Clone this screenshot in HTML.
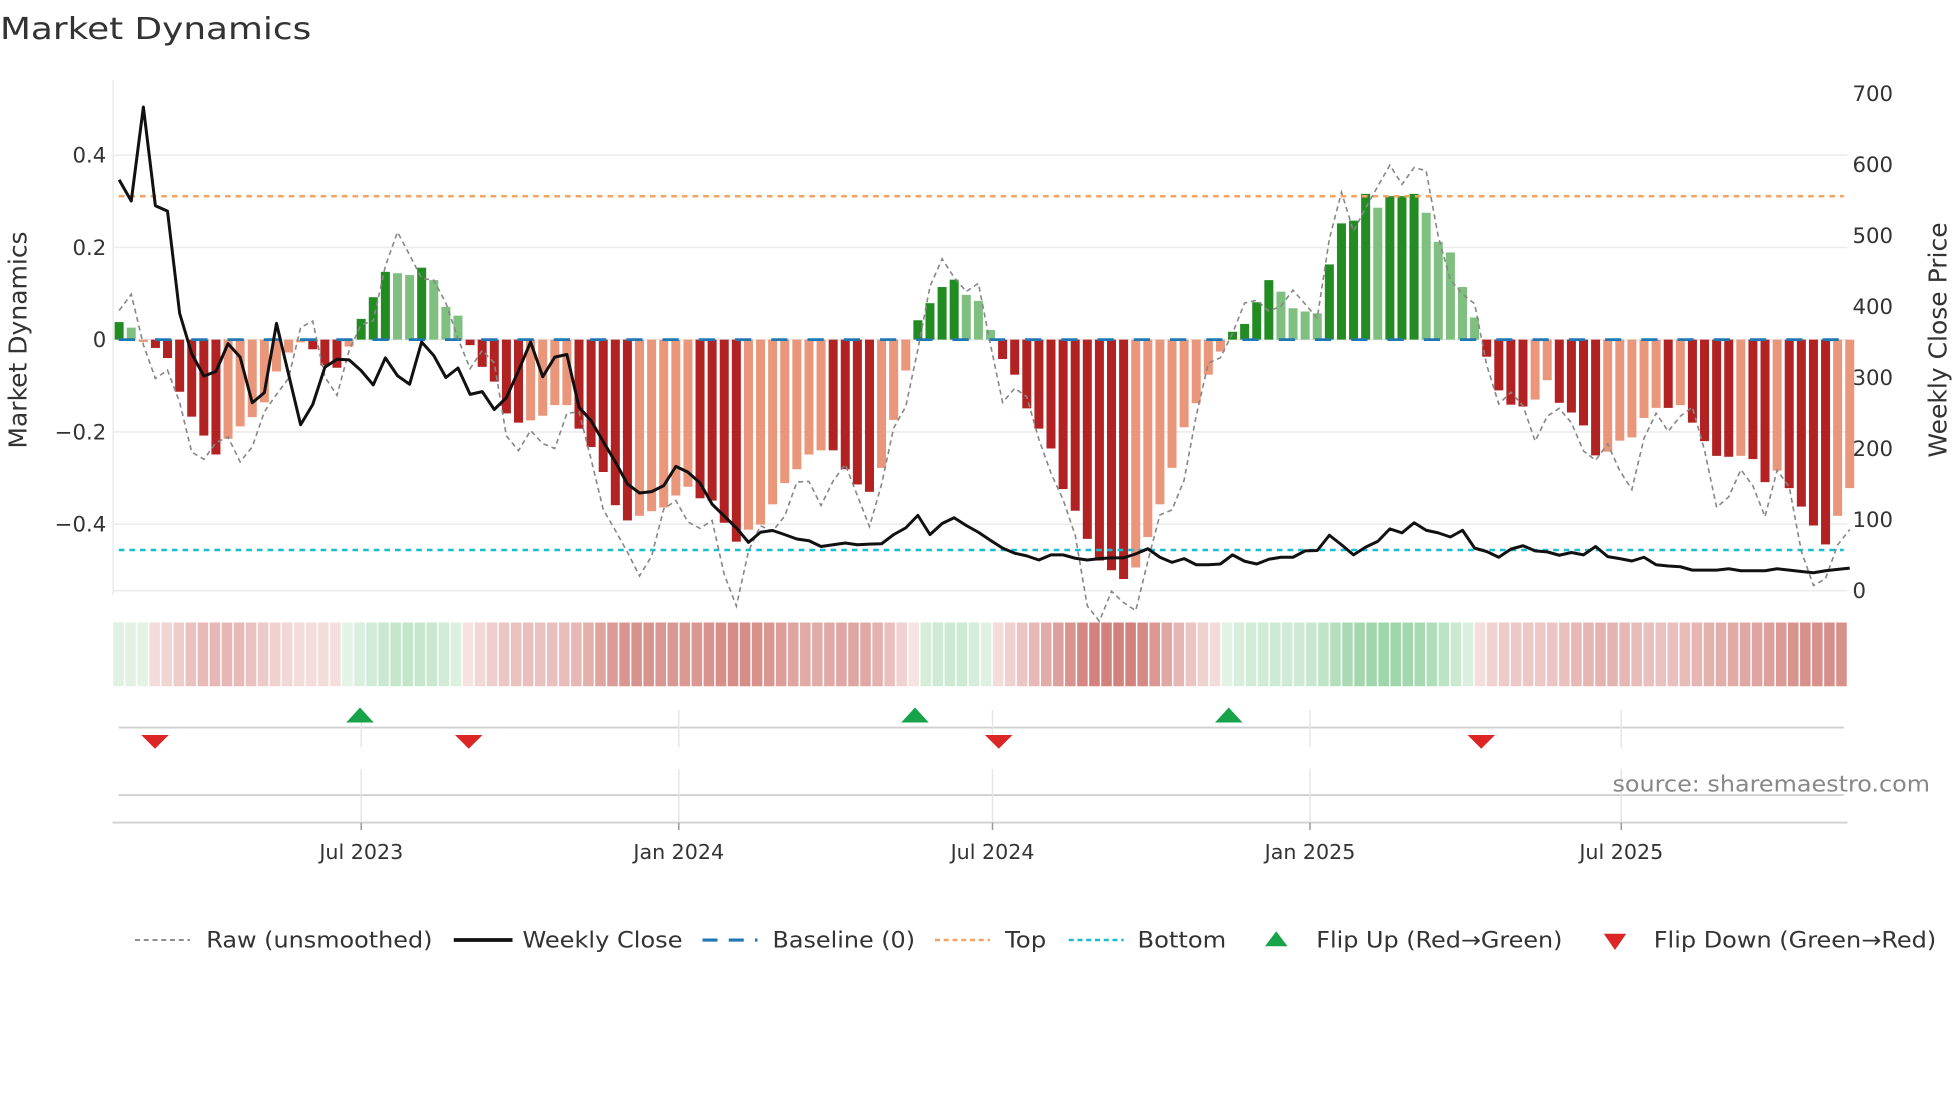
<!DOCTYPE html>
<html><head><meta charset="utf-8">
<style>
html,body{margin:0;padding:0;background:#fff;width:1960px;height:1102px;overflow:hidden}
svg{display:block}
text{font-family:"DejaVu Sans","Liberation Sans",sans-serif;fill:#333}
</style></head>
<body>
<svg id="c" width="1960" height="1102" viewBox="0 0 1568 881.6" xmlns="http://www.w3.org/2000/svg">
<rect width="1568" height="882" fill="#fff"/>
<text x="0" y="31" font-size="24" textLength="249" lengthAdjust="spacingAndGlyphs">Market Dynamics</text>
<g id="grid"></g>
<g id="bars"></g>
<g id="lines"></g>
<g id="heat"></g>
<g id="lower">
 <line x1="95" y1="582" x2="1475" y2="582" stroke="#d0d0d0" stroke-width="1.5"/>
 <line x1="95" y1="636" x2="1475" y2="636" stroke="#d0d0d0" stroke-width="1.5"/>
 <line x1="90" y1="658" x2="1478" y2="658" stroke="#d0d0d0" stroke-width="1.5"/>
</g>
<text x="1544" y="633" font-size="17.5" text-anchor="end" style="fill:#888" textLength="254" lengthAdjust="spacingAndGlyphs">source: sharemaestro.com</text>
<g id="legend" font-size="17.5">
 <line x1="108" y1="752" x2="152" y2="752" stroke="#888" stroke-width="1.5" stroke-dasharray="4,3"/>
 <text x="165" y="758" textLength="181" lengthAdjust="spacingAndGlyphs">Raw (unsmoothed)</text>
 <line x1="363" y1="752" x2="410" y2="752" stroke="#111" stroke-width="3"/>
 <text x="418" y="758" textLength="128" lengthAdjust="spacingAndGlyphs">Weekly Close</text>
 <line x1="562" y1="752" x2="606" y2="752" stroke="#1f77b4" stroke-width="2.5" stroke-dasharray="12,9"/>
 <text x="618" y="758" textLength="114" lengthAdjust="spacingAndGlyphs">Baseline (0)</text>
 <line x1="748" y1="752" x2="792" y2="752" stroke="#f4a460" stroke-width="2" stroke-dasharray="4,3"/>
 <text x="804" y="758" textLength="33" lengthAdjust="spacingAndGlyphs">Top</text>
 <line x1="855" y1="752" x2="899" y2="752" stroke="#17becf" stroke-width="2" stroke-dasharray="4,3"/>
 <text x="910" y="758" textLength="71" lengthAdjust="spacingAndGlyphs">Bottom</text>
 <polygon points="1012,757 1021,745 1030,757" fill="#16a34a"/>
 <text x="1053" y="758" textLength="197" lengthAdjust="spacingAndGlyphs">Flip Up (Red→Green)</text>
 <polygon points="1283,747 1301,747 1292,760" fill="#dc2626"/>
 <text x="1323" y="758" textLength="226" lengthAdjust="spacingAndGlyphs">Flip Down (Green→Red)</text>
</g>
</svg>
<script>
(function(){
var NS="http://www.w3.org/2000/svg";
function el(p,t,a){var e=document.createElementNS(NS,t);for(var k in a)e.setAttribute(k,a[k]);p.appendChild(e);return e;}
var V=[.038,.026,-.005,-.018,-.04,-.113,-.167,-.208,-.249,-.215,-.188,-.168,-.136,-.069,-.028,-.006,-.021,-.056,-.061,-.015,.045,.092,.147,.144,.14,.156,.129,.071,.052,-.012,-.059,-.091,-.16,-.18,-.175,-.165,-.142,-.142,
-.193,-.233,-.287,-.359,-.392,-.382,-.372,-.364,-.338,-.319,-.344,-.349,-.397,-.438,-.412,-.401,-.357,-.311,-.281,-.249,-.24,-.24,-.281,-.314,-.33,-.278,-.174,-.067,.042,.079,.114,.13,.097,.084,.021,
-.042,-.076,-.149,-.193,-.236,-.324,-.371,-.432,-.479,-.5,-.519,-.494,-.428,-.357,-.278,-.19,-.138,-.076,-.026,.017,.034,.081,.129,.104,.068,.061,.057,.163,.252,.258,.316,.286,.311,.311,.316,.275,.212,.189,.114,.048,
-.037,-.11,-.141,-.145,-.13,-.088,-.137,-.158,-.186,-.251,-.243,-.219,-.212,-.17,-.148,-.148,-.142,-.18,-.22,-.252,-.254,-.252,-.259,-.309,-.284,-.322,-.362,-.403,-.444,-.382,-.322];
var F=["100111111","0000000","111","0","111","00","1","000","11111","0000","11111","00000","1111","0000000","1111","000","1111","000","11111111111","00000000","1111","0000","1111","0","111","00000","1111","00","1111","00000","1","0","1111","0","11","0","1111","00"].join("");
var P=[295,358,80,372,388,690,810,876,862,780,820,955,925,720,870,1020,960,850,826,828,860,902,822,875,900,775,815,880,852,930,922,975,940,860,775,878,820,
812,968,1008,1070,1130,1195,1222,1218,1200,1143,1160,1192,1255,1290,1325,1368,1338,1333,1345,1358,1363,1380,1375,1370,1375,1373,1372,1345,1325,1288,1345,1312,1295,1318,1338,1362,1385,
1400,1408,1420,1405,1405,1415,1420,1416,1414,1414,1402,1387,1412,1427,1416,1434,1434,1432,1405,1424,1432,1418,1412,1412,1393,1392,1347,1375,1405,1382,1365,1328,1340,1310,1332,1340,
1352,1332,1385,1395,1412,1388,1378,1393,1396,1406,1398,1405,1380,1410,1416,1423,1412,1434,1438,1440,1450,1450,1450,1446,1452,1452,1452,1446,1450,1454,1458,1452,1448,1444];
var n=V.length, x0=95.3, dx=(1479.8-95.3)/(n-1);
var Y0=271.7, S=73.8/0.2;
function yv(v){return Y0-v*S;}
var g=document.getElementById("grid");
[0.4,0.2,0,-0.2,-0.4].forEach(function(v){el(g,"line",{x1:90,x2:1478,y1:yv(v),y2:yv(v),stroke:"#ececec","stroke-width":1.3});});
el(g,"line",{x1:90,x2:1478,y1:472.5,y2:472.5,stroke:"#ececec","stroke-width":1.3});
el(g,"line",{x1:90.5,x2:90.5,y1:64,y2:476,stroke:"#ececec","stroke-width":1.3});
var lab=[["0.4",0.4],["0.2",0.2],["0",0],["−0.2",-0.2],["−0.4",-0.4]];
lab.forEach(function(l){var t=el(g,"text",{x:85,y:yv(l[1])+6,"font-size":17,"text-anchor":"end"});t.textContent=l[0];});
for(var i=0;i<=7;i++){var y=472.3-i*56.78;var t=el(g,"text",{x:1482,y:y+6,"font-size":17});t.textContent=String(i*100);}
var t1=el(g,"text",{x:0,y:0,"font-size":20,"text-anchor":"middle",transform:"translate(21,272) rotate(-90)"});t1.textContent="Market Dynamics";
var t2=el(g,"text",{x:0,y:0,"font-size":20,"text-anchor":"middle",transform:"translate(1557,272) rotate(-90)"});t2.textContent="Weekly Close Price";
var b=document.getElementById("bars");
for(var k=0;k<n;k++){var v=V[k],d=F[k]=="1",c;
 if(v>=0)c=d?"#228b22":"#7fbf7f";else c=d?"#b22222":"#e9967a";
 var y1=yv(Math.max(v,0)),h=Math.abs(v)*S;
 el(b,"rect",{x:x0+k*dx-3.6,y:y1,width:7.2,height:Math.max(h,0.5),fill:c});}
var L=document.getElementById("lines");
el(L,"line",{x1:95,x2:1475,y1:Y0,y2:Y0,stroke:"#1f77b4","stroke-width":2.2,"stroke-dasharray":"13,16"});
el(L,"line",{x1:95,x2:1475,y1:157,y2:157,stroke:"#f4a460","stroke-width":2,"stroke-dasharray":"4.5,4"});
el(L,"line",{x1:95,x2:1475,y1:440,y2:440,stroke:"#17becf","stroke-width":2,"stroke-dasharray":"4.5,4"});
var rp=[];for(k=0;k<n;k++){var r=V[k]*1.15+0.045*Math.sin(k*1.7)+0.035*Math.sin(k*0.83+1)-0.01;rp.push((x0+k*dx).toFixed(1)+","+yv(r).toFixed(1));}
el(L,"polyline",{points:rp.join(" "),fill:"none",stroke:"#888","stroke-width":1.3,"stroke-dasharray":"4,3"});
var pp=[];for(k=0;k<n;k++){pp.push((x0+k*dx).toFixed(1)+","+(64+P[k]*0.2704).toFixed(1));}
el(L,"polyline",{points:pp.join(" "),fill:"none",stroke:"#111","stroke-width":2.4,"stroke-linejoin":"round"});
var H=document.getElementById("heat");
var hx0=90,hdx=(1478-90)/n;
for(k=0;k<n;k++){var s=0,c2=0;for(var j=-2;j<=2;j++){if(V[k+j]!==undefined){s+=V[k+j];c2++;}}var m=s/c2;
 var a=Math.min(1,Math.abs(m)/0.45)*0.58+0.16;var base=m>=0?[80,180,100]:[195,85,78];
 var col="rgb("+[0,1,2].map(function(q){return Math.round(255-(255-base[q])*a);}).join(",")+")";
 el(H,"rect",{x:hx0+k*hdx+0.6,y:498,width:hdx-1.2,height:51,fill:col});}
var lw=document.getElementById("lower");
[[262,"Jul 2023"],[516,"Jan 2024"],[767,"Jul 2024"],[1021,"Jan 2025"],[1270,"Jul 2025"]].forEach(function(tk){
 var xx=tk[0]+27;
 el(lw,"line",{x1:xx,x2:xx,y1:568,y2:598,stroke:"#e6e6e6","stroke-width":1.2});
 el(lw,"line",{x1:xx,x2:xx,y1:615,y2:658,stroke:"#e6e6e6","stroke-width":1.2});
 el(lw,"line",{x1:xx,x2:xx,y1:658,y2:664,stroke:"#999","stroke-width":1.2});
 var t=el(lw,"text",{x:xx,y:687,"font-size":16.5,"text-anchor":"middle"});t.textContent=tk[1];});
[288,732,983].forEach(function(xx){el(lw,"polygon",{points:(xx-11)+",578 "+xx+",566 "+(xx+11)+",578",fill:"#16a34a"});});
[124,375,799,1185].forEach(function(xx){el(lw,"polygon",{points:(xx-11)+",588 "+(xx+11)+",588 "+xx+",599",fill:"#dc2626"});});
})();
</script>
</body></html>
